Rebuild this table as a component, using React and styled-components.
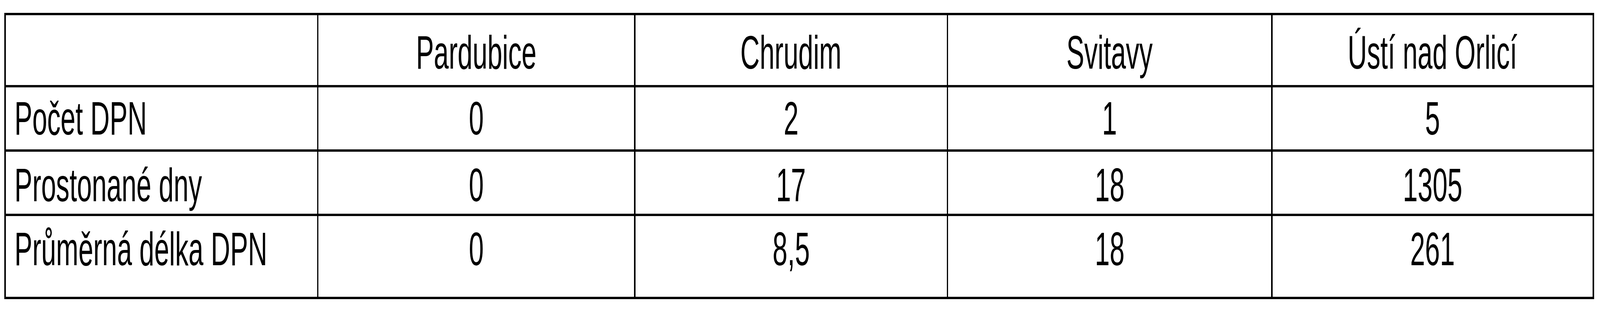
import React from 'react';
import styled, { createGlobalStyle } from 'styled-components';

// the browser frame is 4096px wide while the reference is 7174px wide,
// so every horizontal measure is squeezed by this factor
const K = 4096 / 7174;
const sx = v => `${(v * K).toFixed(2)}px`;

const GlobalStyle = createGlobalStyle`
  html, body {
    margin: 0;
    padding: 0;
    background: #ffffff;
    overflow: hidden;
  }
  body {
    font-family: "Liberation Sans", Arial, Helvetica, sans-serif;
    color: #000000;
  }
`;

const Page = styled.div`
  padding: 33px 0 0 ${sx(20)};
  height: 800px;
  box-sizing: border-box;
  background: #ffffff;
`;

// the black grid showing through the gaps draws the rules
const Table = styled.div`
  display: inline-grid;
  grid-template-columns: ${[1396, 1415, 1396, 1449, 1435].map(sx).join(' ')};
  grid-template-rows: 179px 159px 159px 207px;
  column-gap: ${sx(6)};
  row-gap: 6px;
  padding: 6px ${sx(6)};
  background: #000000;
`;

const Cell = styled.div`
  background: #ffffff;
  padding-top: ${p => p.$top}px;
  padding-left: ${p => (p.$label ? sx(38) : 0)};
  text-align: ${p => (p.$label ? 'left' : 'center')};
  overflow: visible;
  white-space: nowrap;
`;

const Text = styled.span`
  display: inline-block;
  font-size: 120px;
  line-height: 1;
  transform: scaleX(${K});
  transform-origin: ${p => (p.$label ? 'left' : 'center')} top;
`;

const header = ['', 'Pardubice', 'Chrudim', 'Svitavy', 'Ústí nad Orlicí'];

const rows = [
  { label: 'Počet DPN', values: ['0', '2', '1', '5'] },
  { label: 'Prostonané dny', values: ['0', '17', '18', '1305'] },
  { label: 'Průměrná délka DPN', values: ['0', '8,5', '18', '261'] }
];

// top padding per row, measured from the picture
const rowTop = [35, 19, 25, 24];

export default function App() {
  return (
    <Page>
      <GlobalStyle />
      <Table>
        {header.map((h, i) => (
          <Cell key={'h' + i} $top={rowTop[0]} $label={i === 0}>
            <Text $label={i === 0}>{h}</Text>
          </Cell>
        ))}
        {rows.map((row, r) => (
          <React.Fragment key={row.label}>
            <Cell $top={rowTop[r + 1]} $label>
              <Text $label>{row.label}</Text>
            </Cell>
            {row.values.map((v, c) => (
              <Cell key={c} $top={rowTop[r + 1]}>
                <Text>{v}</Text>
              </Cell>
            ))}
          </React.Fragment>
        ))}
      </Table>
    </Page>
  );
}
